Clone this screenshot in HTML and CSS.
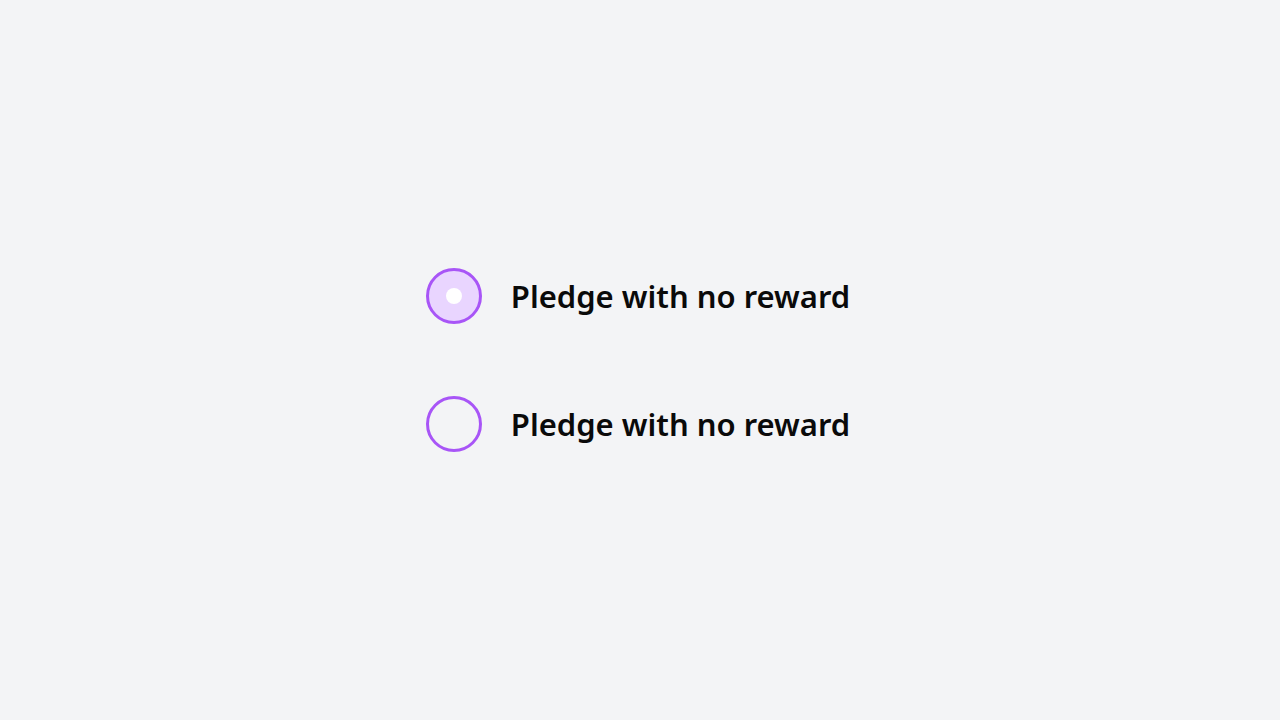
FILE: index.html
```html
<!DOCTYPE html>
<html>
<head>
<meta charset="utf-8">
<link rel="stylesheet" href="styles.css">
</head>
<body>
<main class="page">
  <div class="options">
    <label class="option">
      <span class="radio radio--checked"><span class="dot"></span></span>
      <span class="label">Pledge with no reward</span>
    </label>
    <label class="option">
      <span class="radio"></span>
      <span class="label">Pledge with no reward</span>
    </label>
  </div>
</main>
</body>
</html>
```

FILE: styles.css
```css
html, body {
  margin: 0;
  padding: 0;
  background: #f3f4f6;
}
.page {
  width: 1280px;
  height: 720px;
  display: flex;
  align-items: center;
  justify-content: center;
}
.options {
  display: flex;
  flex-direction: column;
  gap: 72px;
  margin-left: -4px;
}
.option {
  display: flex;
  align-items: center;
  gap: 29px;
}
.radio {
  box-sizing: border-box;
  width: 56px;
  height: 56px;
  border: 3px solid #a855f7;
  border-radius: 50%;
  display: flex;
  align-items: center;
  justify-content: center;
}
.radio--checked {
  background: #e9d5ff;
}
.dot {
  width: 16px;
  height: 16px;
  border-radius: 50%;
  background: #ffffff;
}
.label {
  font-family: "Noto Sans", sans-serif;
  font-weight: 600;
  font-size: 31px;
  color: #0a0a0a;
  line-height: 1;
}
```
